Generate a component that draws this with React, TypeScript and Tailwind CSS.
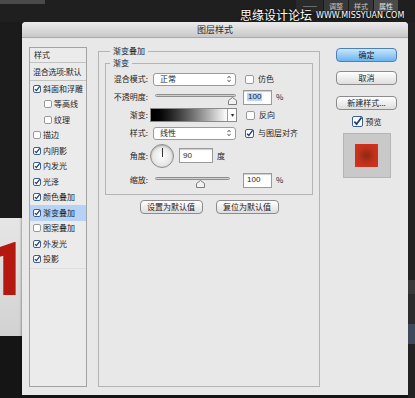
import React from "react";

const font = { fontFamily: '"Noto Sans CJK SC", "Noto Sans", sans-serif' };

function Check({ on, size = 9 }: { on?: boolean; size?: number }) {
  return (
    <span
      className={`inline-flex shrink-0 items-center justify-center rounded-[2px] border bg-white ${
        on ? "border-[#3d5f94]" : "border-[#9a9a9a]"
      }`}
      style={{ width: size, height: size }}
    >
      {on && (
        <svg viewBox="0 0 10 10" className="h-full w-full">
          <path d="M1.5 5.2 L4 7.8 L9.5 0.5" fill="none" stroke="#1e3f78" strokeWidth="2" />
        </svg>
      )}
    </span>
  );
}

function MacButton({ label, w, primary }: { label: string; w: number; primary?: boolean }) {
  return (
    <div
      className={`flex h-[14px] items-center justify-center rounded-[4px] border text-[8px] leading-none text-[#1a1a1a] ${
        primary
          ? "border-[#4d7fb8] bg-linear-to-b from-[#c9e6fd] to-[#6ab4f0]"
          : "border-[#8c8c8c] bg-linear-to-b from-white to-[#dedede]"
      }`}
      style={{ width: w }}
    >
      {label}
    </div>
  );
}

function Select({ value }: { value: string }) {
  return (
    <div className="flex h-[13px] w-[83px] items-center justify-between rounded-[3px] border border-[#9b9b9b] bg-white pl-[6px] pr-[4px] text-[8px] leading-none">
      <span>{value}</span>
      <svg viewBox="0 0 5 9" className="h-[8px] w-[4px]">
        <path d="M0.5 3.5 L2.5 1 L4.5 3.5 M0.5 5.5 L2.5 8 L4.5 5.5" fill="none" stroke="#333" strokeWidth="1" />
      </svg>
    </div>
  );
}

function Slider({ w, pos }: { w: number; pos: number }) {
  return (
    <div className="relative h-[10px]" style={{ width: w }}>
      <div className="mt-[3px] h-[3px] w-full rounded-full border border-[#8e8e8e] bg-linear-to-b from-[#bdbdbd] to-[#e2e2e2]" />
      <svg
        viewBox="0 0 9 8"
        className="absolute top-[3px] h-[8px] w-[9px]"
        style={{ left: pos }}
      >
        <path d="M0.5 7.5 V3.5 L4.5 0.5 L8.5 3.5 V7.5 Z" fill="#f2f2f2" stroke="#7d7d7d" />
      </svg>
    </div>
  );
}

function NumBox({ value, w, selected }: { value: string; w: number; selected?: boolean }) {
  return (
    <div
      className="flex h-[15px] items-center border border-[#9a9a9a] bg-white pl-[3px] text-[8px] leading-none shadow-[inset_0_1px_1px_rgba(0,0,0,0.2)]"
      style={{ width: w, fontFamily: '"Liberation Sans", sans-serif' }}
    >
      <span className={selected ? "bg-[#b5d5fb] px-[1px] text-[#1a1a1a]" : ""}>{value}</span>
    </div>
  );
}

const listItems: { label: string; on: boolean; indent?: boolean; active?: boolean }[] = [
  { label: "斜面和浮雕", on: true },
  { label: "等高线", on: false, indent: true },
  { label: "纹理", on: false, indent: true },
  { label: "描边", on: false },
  { label: "内阴影", on: true },
  { label: "内发光", on: true },
  { label: "光泽", on: true },
  { label: "颜色叠加", on: true },
  { label: "渐变叠加", on: true, active: true },
  { label: "图案叠加", on: false },
  { label: "外发光", on: true },
  { label: "投影", on: true },
];

export default function App() {
  return (
    <div className="flex h-[398px] w-[415px] flex-col overflow-hidden bg-[#1c1c1c] text-[#1e1e1e]" style={font}>
      {/* top strip */}
      <div className="relative flex h-[22px] shrink-0 justify-between bg-[#1f1f1f]">
        <div className="h-[4px] w-[45px] bg-[#4a4a4a]" />
        <div className="flex h-[12px] items-stretch pr-[17px] text-[7px] text-[#c4c4c4]">
          <div className="flex w-[27px] items-center justify-center bg-[#2a2a2a]">
            <div className="h-[1px] w-[14px] bg-[#6a6a6a]" />
          </div>
          <div className="flex w-[25px] items-center justify-center border-l border-[#1a1a1a] bg-[#383838]">调整</div>
          <div className="flex w-[25px] items-center justify-center border-l border-[#1a1a1a] bg-[#383838]">样式</div>
          <div className="flex w-[25px] items-center justify-center border-l border-[#1a1a1a] bg-[#4b4b4b] text-[#e8e8e8]">属性</div>
        </div>
        <div className="absolute left-[240px] top-[8px] flex items-end gap-[4px] text-white [text-shadow:0_0_2px_#000]">
          <span className="text-[12px] leading-[14px]">思缘设计论坛</span>
          <span className="pb-[1px] text-[8px] leading-[10px]" style={{ fontFamily: '"DejaVu Sans", sans-serif' }}>
            WWW.MISSYUAN.COM
          </span>
        </div>
      </div>

      <div className="flex flex-1">
        {/* left background strip */}
        <div className="flex w-[22px] shrink-0 flex-col">
          <div className="h-[196px] bg-[#1b1b1b]" />
          <div className="h-[118px] overflow-hidden bg-linear-to-b from-[#e6e6e6] to-[#d2d2d2]">
            <div
              className="ml-[-15px] mt-[14px] text-[75px] font-black leading-none text-[#b4180e]"
              style={{ fontFamily: 'Roboto, "Liberation Sans", sans-serif' }}
            >
              1
            </div>
          </div>
          <div className="flex-1 bg-[#151515]" />
        </div>

        {/* dialog */}
        <div className="flex w-[386px] shrink-0 flex-col">
          <div className="flex h-[373px] flex-col overflow-hidden rounded-t-[4px] bg-[#e8e8e8] shadow-[0_0_3px_rgba(0,0,0,0.6)]">
            <div className="flex h-[16px] shrink-0 items-center justify-center border-b border-[#a8a8a8] bg-linear-to-b from-[#ececec] to-[#c9c9c9] text-[9px] leading-none text-[#2a2a2a]">
              图层样式
            </div>
            <div className="flex flex-1 pb-[8px] pl-[7px] pr-[11px] pt-[9px]">
              {/* left panel */}
              <div className="flex w-[58px] flex-col border border-[#a3a3a3] bg-[#ebebeb] text-[8px] leading-none">
                <div className="flex h-[15px] items-center border-b border-[#c2c2c2] pl-[4px]">样式</div>
                <div className="flex h-[18px] items-center whitespace-nowrap border-b border-[#c2c2c2] pl-[3px] tracking-[-0.3px]">
                  混合选项:默认
                </div>
                {listItems.map((it) => (
                  <div
                    key={it.label}
                    className={`flex h-[15.5px] items-center gap-[2px] whitespace-nowrap ${
                      it.indent ? "pl-[14px]" : "pl-[3px]"
                    } ${it.active ? "bg-[#b6d3f6]" : ""}`}
                  >
                    <Check on={it.on} size={8} />
                    <span>{it.label}</span>
                  </div>
                ))}
                <div className="mt-[1px] flex-1 border-t border-[#dedede]" />
              </div>

              {/* middle */}
              <fieldset className="ml-[11px] w-[222px] border border-[#b4b4b4] px-[6px] pb-0 text-[8px] leading-none">
                <legend className="ml-[5px] px-[3px] text-[8px] leading-[8px]">渐变叠加</legend>
                <fieldset className="mt-[4px] border border-[#b4b4b4] pb-[3px]">
                  <legend className="ml-[4px] px-[3px] text-[8px] leading-[8px]">渐变</legend>
                  <div className="mt-[3px] flex h-[18px] items-center">
                    <span className="w-[42px] text-right">混合模式:</span>
                    <div className="ml-[5px]">
                      <Select value="正常" />
                    </div>
                    <div className="ml-[9px] flex items-center gap-[4px]">
                      <Check />
                      <span>仿色</span>
                    </div>
                  </div>
                  <div className="flex h-[18px] items-center">
                    <span className="w-[42px] text-right">不透明度:</span>
                    <div className="ml-[7px]">
                      <Slider w={81} pos={73} />
                    </div>
                    <div className="ml-[7px]">
                      <NumBox value="100" w={29} selected />
                    </div>
                    <span className="ml-[4px]">%</span>
                  </div>
                  <div className="flex h-[18px] items-center">
                    <span className="w-[42px] text-right">渐变:</span>
                    <div className="ml-[2px] flex h-[14px] border border-[#8a8a8a]">
                      <div className="w-[76px] bg-linear-to-r from-black to-white" />
                      <div className="flex w-[9px] items-center justify-center border-l border-[#9a9a9a] bg-white text-[6px]">▾</div>
                    </div>
                    <div className="ml-[9px] flex items-center gap-[4px]">
                      <Check />
                      <span>反向</span>
                    </div>
                  </div>
                  <div className="flex h-[18px] items-center">
                    <span className="w-[42px] text-right">样式:</span>
                    <div className="ml-[5px]">
                      <Select value="线性" />
                    </div>
                    <div className="ml-[9px] flex items-center gap-[4px]">
                      <Check on />
                      <span>与图层对齐</span>
                    </div>
                  </div>
                  <div className="flex h-[27px] items-center">
                    <span className="w-[42px] text-right">角度:</span>
                    <div className="ml-[2px] flex h-[24px] w-[24px] items-start justify-center rounded-full border border-[#8d8d8d] bg-radial from-white to-[#d6d6d6] shadow-[inset_0_1px_2px_rgba(0,0,0,0.25)]">
                      <div className="mt-[3px] h-[9px] w-[1px] bg-[#333]" />
                    </div>
                    <div className="ml-[5px]">
                      <NumBox value="90" w={34} />
                    </div>
                    <span className="ml-[4px]">度</span>
                  </div>
                  <div className="flex h-[22px] items-center">
                    <span className="w-[42px] text-right">缩放:</span>
                    <div className="ml-[7px]">
                      <Slider w={75} pos={41} />
                    </div>
                    <div className="ml-[13px]">
                      <NumBox value="100" w={29} />
                    </div>
                    <span className="ml-[4px]">%</span>
                  </div>
                </fieldset>
                <div className="mt-[5px] flex justify-center gap-[13px]">
                  <MacButton label="设置为默认值" w={63} />
                  <MacButton label="复位为默认值" w={63} />
                </div>
              </fieldset>

              {/* right column */}
              <div className="ml-[16px] flex w-[61px] flex-col items-center">
                <div className="mt-[1px]">
                  <MacButton label="确定" w={61} primary />
                </div>
                <div className="mt-[9px]">
                  <MacButton label="取消" w={61} />
                </div>
                <div className="mt-[11px]">
                  <MacButton label="新建样式..." w={61} />
                </div>
                <div className="mt-[6px] flex items-center gap-[3px] text-[8px] leading-none">
                  <Check on size={11} />
                  <span>预览</span>
                </div>
                <div className="mt-[6px] flex h-[45px] w-[48px] items-center justify-center border border-[#b5b5b5] bg-[#c9c9c9]">
                  <div className="h-[23px] w-[23px] bg-radial from-[#8a2a14] via-[#c2301c] to-[#d7321f]" />
                </div>
              </div>
            </div>
          </div>
          <div className="flex-1 bg-[#151515]" />
        </div>

        {/* right background strip */}
        <div className="flex w-[7px] flex-col bg-[#222]">
          <div className="h-[258px]" />
          <div className="h-[14px] bg-[#3a3a3a]" />
          <div className="h-[30px] bg-[#2c2c2c]" />
          <div className="h-[20px] bg-[#3e4a5c]" />
          <div className="flex-1" />
        </div>
      </div>
    </div>
  );
}
